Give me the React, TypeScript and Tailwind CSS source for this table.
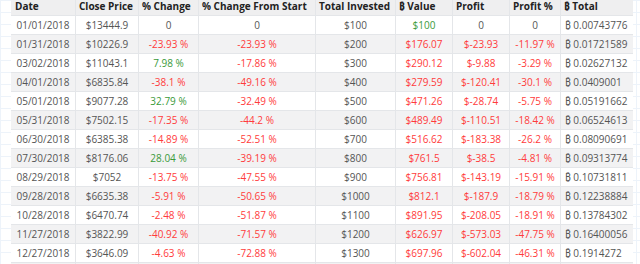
import type { FC } from "react";

type Row = {
  date: string;
  price: string;
  change: string;
  fromStart: string;
  invested: string;
  value: string;
  profit: string;
  profitPct: string;
  total: string;
};

const rows: Row[] = [
  { date: "01/01/2018", price: "$13444.9", change: "0", fromStart: "0", invested: "$100", value: "$100", profit: "0", profitPct: "0", total: "0.00743776" },
  { date: "01/31/2018", price: "$10226.9", change: "-23.93 %", fromStart: "-23.93 %", invested: "$200", value: "$176.07", profit: "$-23.93", profitPct: "-11.97 %", total: "0.01721589" },
  { date: "03/02/2018", price: "$11043.1", change: "7.98 %", fromStart: "-17.86 %", invested: "$300", value: "$290.12", profit: "$-9.88", profitPct: "-3.29 %", total: "0.02627132" },
  { date: "04/01/2018", price: "$6835.84", change: "-38.1 %", fromStart: "-49.16 %", invested: "$400", value: "$279.59", profit: "$-120.41", profitPct: "-30.1 %", total: "0.0409001" },
  { date: "05/01/2018", price: "$9077.28", change: "32.79 %", fromStart: "-32.49 %", invested: "$500", value: "$471.26", profit: "$-28.74", profitPct: "-5.75 %", total: "0.05191662" },
  { date: "05/31/2018", price: "$7502.15", change: "-17.35 %", fromStart: "-44.2 %", invested: "$600", value: "$489.49", profit: "$-110.51", profitPct: "-18.42 %", total: "0.06524613" },
  { date: "06/30/2018", price: "$6385.38", change: "-14.89 %", fromStart: "-52.51 %", invested: "$700", value: "$516.62", profit: "$-183.38", profitPct: "-26.2 %", total: "0.08090691" },
  { date: "07/30/2018", price: "$8176.06", change: "28.04 %", fromStart: "-39.19 %", invested: "$800", value: "$761.5", profit: "$-38.5", profitPct: "-4.81 %", total: "0.09313774" },
  { date: "08/29/2018", price: "$7052", change: "-13.75 %", fromStart: "-47.55 %", invested: "$900", value: "$756.81", profit: "$-143.19", profitPct: "-15.91 %", total: "0.10731811" },
  { date: "09/28/2018", price: "$6635.38", change: "-5.91 %", fromStart: "-50.65 %", invested: "$1000", value: "$812.1", profit: "$-187.9", profitPct: "-18.79 %", total: "0.12238884" },
  { date: "10/28/2018", price: "$6470.74", change: "-2.48 %", fromStart: "-51.87 %", invested: "$1100", value: "$891.95", profit: "$-208.05", profitPct: "-18.91 %", total: "0.13784302" },
  { date: "11/27/2018", price: "$3822.99", change: "-40.92 %", fromStart: "-71.57 %", invested: "$1200", value: "$626.97", profit: "$-573.03", profitPct: "-47.75 %", total: "0.16400056" },
  { date: "12/27/2018", price: "$3646.09", change: "-4.63 %", fromStart: "-72.88 %", invested: "$1300", value: "$697.96", profit: "$-602.04", profitPct: "-46.31 %", total: "0.1914272" },
];

// red for negatives, green for positives, plain grey for zero
function tone(v: string) {
  if (v === "0") return "text-[#555]";
  return v.includes("-") ? "text-[#ff3b3b]" : "text-[#3a9a3a]";
}

const cols = "grid grid-cols-[64px_63px_60px_117px_80px_57px_57px_51px_73px]";
const cell = "border-l border-[#e4e6e9] first:border-l-0 flex items-center";

const App: FC = () => {
  return (
    <div
      className="w-[640px] h-[264px] overflow-hidden bg-white bg-[linear-gradient(to_right,#edf3fa_1px,transparent_1px),linear-gradient(to_bottom,#edf3fa_1px,transparent_1px)] bg-[size:12px_12px] pl-[11px] text-[10px] text-[#555]"
      style={{ fontFamily: '"Open Sans", "Noto Sans", sans-serif' }}
    >
      <div className="w-[622px]">
        <div className={`${cols} h-[15px] bg-[#efeff0] font-bold text-[#222]`}>
          <div className={`${cell} px-[4px] items-start leading-[13px]`}>Date</div>
          <div className={`${cell} px-[3px] items-start leading-[13px]`}>Close Price</div>
          <div className={`${cell} px-[3px] items-start leading-[13px]`}>% Change</div>
          <div className={`${cell} px-[3px] items-start leading-[13px]`}>% Change From Start</div>
          <div className={`${cell} px-[3px] items-start leading-[13px]`}>Total Invested</div>
          <div className={`${cell} px-[3px] items-start leading-[13px]`}>₿ Value</div>
          <div className={`${cell} px-[3px] items-start leading-[13px]`}>Profit</div>
          <div className={`${cell} px-[3px] items-start leading-[13px]`}>Profit %</div>
          <div className={`${cell} px-[3px] items-start leading-[13px]`}>₿ Total</div>
        </div>

        {rows.map((r, i) => (
          <div
            key={r.date}
            className={`${cols} h-[19px] border-t border-[#e4e6e9] ${i % 2 === 1 ? "bg-[#f2f2f3]" : "bg-white"}`}
          >
            <div className={`${cell} justify-center`}>{r.date}</div>
            <div className={`${cell} justify-center`}>{r.price}</div>
            <div className={`${cell} justify-center ${tone(r.change)}`}>{r.change}</div>
            <div className={`${cell} justify-center ${tone(r.fromStart)}`}>{r.fromStart}</div>
            <div className={`${cell} justify-center`}>{r.invested}</div>
            <div className={`${cell} justify-center ${i === 0 ? "text-[#3a9a3a]" : "text-[#ff3b3b]"}`}>{r.value}</div>
            <div className={`${cell} justify-center ${tone(r.profit)}`}>{r.profit}</div>
            <div className={`${cell} justify-center ${tone(r.profitPct)}`}>{r.profitPct}</div>
            <div className={`${cell} px-[4px]`}>₿ {r.total}</div>
          </div>
        ))}

        <div className={`${cols} h-[19px] border-t border-[#e4e6e9] bg-[#f2f2f3]`}>
          {Array.from({ length: 9 }).map((_, k) => (
            <div key={k} className={cell} />
          ))}
        </div>
      </div>
    </div>
  );
};

export default App;
